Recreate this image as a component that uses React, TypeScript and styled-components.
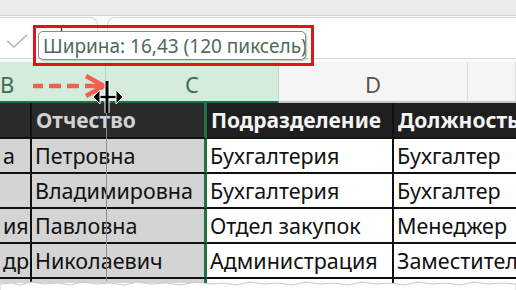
import React from "react";
import styled, { createGlobalStyle } from "styled-components";

const Global = createGlobalStyle`
  html, body {
    margin: 0;
    padding: 0;
    background: #ffffff;
    overflow: hidden;
  }
`;

const FONT = `"Noto Sans", "Liberation Sans", sans-serif`;

const COLS = ["B", "C", "D", ""];
const COL_WIDTHS = [106, 173, 189];

const ROWS = [
  ["а", "Петровна", "Бухгалтерия", "Бухгалтер"],
  ["", "Владимировна", "Бухгалтерия", "Бухгалтер"],
  ["ия", "Павловна", "Отдел закупок", "Менеджер"],
  ["др", "Николаевич", "Администрация", "Заместитель"],
  ["", "", "", ""],
];

function App() {
  return (
    <S.Page>
      <Global />
      <S.Ribbon />
      <S.FormulaBar>
        <S.CommandBox>
          <svg width="24" height="16" viewBox="0 0 24 16">
            <path d="M2 8 L9 14 L22 2" fill="none" stroke="#b5b5b5" strokeWidth="1.6" />
          </svg>
          {/* fx button, mostly hidden under the hint */}
          <S.FxIcon width="10" height="10" viewBox="0 0 10 10">
            <path d="M7 2 C5 0.5 3.5 2 3.5 4 V10" fill="none" stroke="#444" strokeWidth="1.4" />
          </S.FxIcon>
        </S.CommandBox>
        <S.FormulaInput />
      </S.FormulaBar>

      <S.ColumnHeaders>
        {COLS.map((c, i) => (
          <S.ColHead key={i} $selected={i < 2} $width={COL_WIDTHS[i]}>
            {c}
          </S.ColHead>
        ))}
      </S.ColumnHeaders>

      <S.Sheet>
        <S.Row $head>
          <S.Cell $head $selected />
          <S.Cell $head $selected $edge>
            Отчество
          </S.Cell>
          <S.Cell $head>Подразделение</S.Cell>
          <S.Cell $head>Должность</S.Cell>
        </S.Row>
        {ROWS.map((r, i) => (
          <S.Row key={i}>
            {r.map((v, j) => (
              <S.Cell key={j} $selected={j < 2} $edge={j === 1}>
                {v}
              </S.Cell>
            ))}
          </S.Row>
        ))}
      </S.Sheet>
      <S.TornEdge viewBox="0 0 516 14" preserveAspectRatio="none">
        <path
          d="M0 5 L12 4 L20 6 L31 3 L44 5 L58 4 L70 6 L83 3 L97 5 L110 4 L124 6 L138 3 L150 5 L166 4 L180 6 L196 3 L210 5 L224 4 L236 6 L250 3 L264 5 L279 4 L292 6 L306 3 L320 5 L334 4 L348 6 L362 3 L376 5 L390 4 L404 6 L418 3 L432 5 L446 4 L460 6 L474 3 L488 5 L502 4 L516 5 L516 14 L0 14 Z"
          fill="#ffffff"
          stroke="#c9c9c9"
          strokeWidth="1"
        />
      </S.TornEdge>

      <S.GuideLine />

      <S.WidthHint>
        <S.Tooltip>Ширина: 16,43 (120 пиксель)</S.Tooltip>
      </S.WidthHint>

      <S.DragArrow width="80" height="26" viewBox="0 0 80 26">
        <g stroke="#f2604f" strokeWidth="4.5" fill="none" strokeLinecap="butt">
          <path d="M2 13 H12" />
          <path d="M18 13 H30" />
          <path d="M36 13 H48" />
          <path d="M54 13 H70" />
          <path d="M55 3 L73 13 L55 23" strokeLinejoin="miter" />
        </g>
      </S.DragArrow>

      <S.Cursor width="34" height="36" viewBox="0 0 34 36">
        <g stroke="#ffffff" strokeWidth="5" fill="none">
          <path d="M16 2 V34" />
          <path d="M4 18 H30" />
        </g>
        <path d="M16 2 V34" stroke="#000" strokeWidth="3" />
        <path d="M5 18 H29" stroke="#000" strokeWidth="2.4" />
        <path d="M2 18 L9 11 V25 Z" fill="#000" stroke="#fff" strokeWidth="1" />
        <path d="M32 18 L25 11 V25 Z" fill="#000" stroke="#fff" strokeWidth="1" />
      </S.Cursor>
    </S.Page>
  );
}

const S = {
  Page: styled.div`
    position: relative;
    width: 516px;
    height: 290px;
    overflow: hidden;
    background: #ffffff;
    font-family: ${FONT};
  `,
  Ribbon: styled.div`
    height: 15px;
    background: #ececec;
    border-bottom: 1px solid #d6d6d6;
  `,
  FormulaBar: styled.div`
    display: flex;
    gap: 9px;
    height: 46px;
    box-sizing: border-box;
    padding: 1px 0 3px;
    background: #fafafa;
  `,
  CommandBox: styled.div`
    width: 98px;
    box-sizing: border-box;
    display: flex;
    align-items: center;
    padding: 6px 0 0 5px;
    background: #ffffff;
    border: 1px solid #d8d8d8;
    border-left: none;
    border-radius: 0 8px 8px 0;
  `,
  FxIcon: styled.svg`
    margin-left: 29px;
    margin-top: -24px;
  `,
  FormulaInput: styled.div`
    flex: 1;
    background: #ffffff;
    border: 1px solid #d8d8d8;
    border-right: none;
    border-radius: 8px 0 0 8px;
  `,
  ColumnHeaders: styled.div`
    display: flex;
    height: 41px;
  `,
  ColHead: styled.div<{ $selected?: boolean; $width?: number }>`
    box-sizing: border-box;
    ${({ $width }) => ($width ? `width: ${$width}px;` : "flex: 1;")}
    display: flex;
    align-items: center;
    justify-content: center;
    padding-top: 4px;
    font-size: 22px;
    color: ${({ $selected }) => ($selected ? "#3f6d58" : "#555555")};
    background: ${({ $selected }) => ($selected ? "#d3ecdc" : "#f5f5f5")};
    border-right: 1px solid ${({ $selected }) => ($selected ? "#b9d6c3" : "#dadada")};
    border-bottom: 2px solid ${({ $selected }) => ($selected ? "#1e7145" : "#c4c4c4")};
    &:first-child {
      justify-content: flex-start;
      padding-left: 0;
    }
  `,
  Sheet: styled.div`
    height: 180px;
    overflow: hidden;
  `,
  Row: styled.div<{ $head?: boolean }>`
    display: grid;
    grid-template-columns: 32px 175px 187px 1fr;
    height: ${({ $head }) => ($head ? 36 : 35)}px;
  `,
  Cell: styled.div<{ $head?: boolean; $selected?: boolean; $edge?: boolean }>`
    box-sizing: border-box;
    display: flex;
    align-items: center;
    padding-left: ${({ $head }) => ($head ? 4 : 3)}px;
    overflow: hidden;
    white-space: nowrap;
    font-size: ${({ $head }) => ($head ? 21 : 21.5)}px;
    font-weight: ${({ $head }) => ($head ? 700 : 400)};
    color: ${({ $head, $selected }) =>
      $head ? ($selected ? "#d2d2d2" : "#f4f4f4") : "#111111"};
    background: ${({ $head, $selected }) =>
      $head ? ($selected ? "#2a2a2a" : "#1f1f1f") : $selected ? "#d4d4d4" : "#ffffff"};
    border-bottom: 2px solid #111111;
    border-right: ${({ $edge }) => ($edge ? "3px solid #217346" : "2px solid #111111")};
    &:last-child {
      border-right: none;
    }
  `,
  TornEdge: styled.svg`
    display: block;
    width: 516px;
    height: 14px;
    margin-top: -4px;
  `,
  GuideLine: styled.div`
    position: absolute;
    left: 106px;
    top: 103px;
    width: 1px;
    height: 178px;
    background: #8c8c8c;
  `,
  WidthHint: styled.div`
    position: absolute;
    left: 33px;
    top: 25px;
    width: 281px;
    height: 41px;
    box-sizing: border-box;
    border: 3px solid #e2141b;
    padding: 3px 5px 3px 2px;
    display: flex;
  `,
  Tooltip: styled.div`
    flex: 1;
    display: flex;
    align-items: center;
    padding-left: 4px;
    background: #ffffff;
    border: 1px solid #8a8a8a;
    border-radius: 5px;
    box-shadow: 1px 1px 2px rgba(0, 0, 0, 0.25);
    font-size: 19px;
    color: #4c6b5b;
    white-space: nowrap;
    overflow: hidden;
  `,
  DragArrow: styled.svg`
    position: absolute;
    left: 31px;
    top: 73px;
  `,
  Cursor: styled.svg`
    position: absolute;
    left: 91px;
    top: 79px;
  `,
};

export default App;
